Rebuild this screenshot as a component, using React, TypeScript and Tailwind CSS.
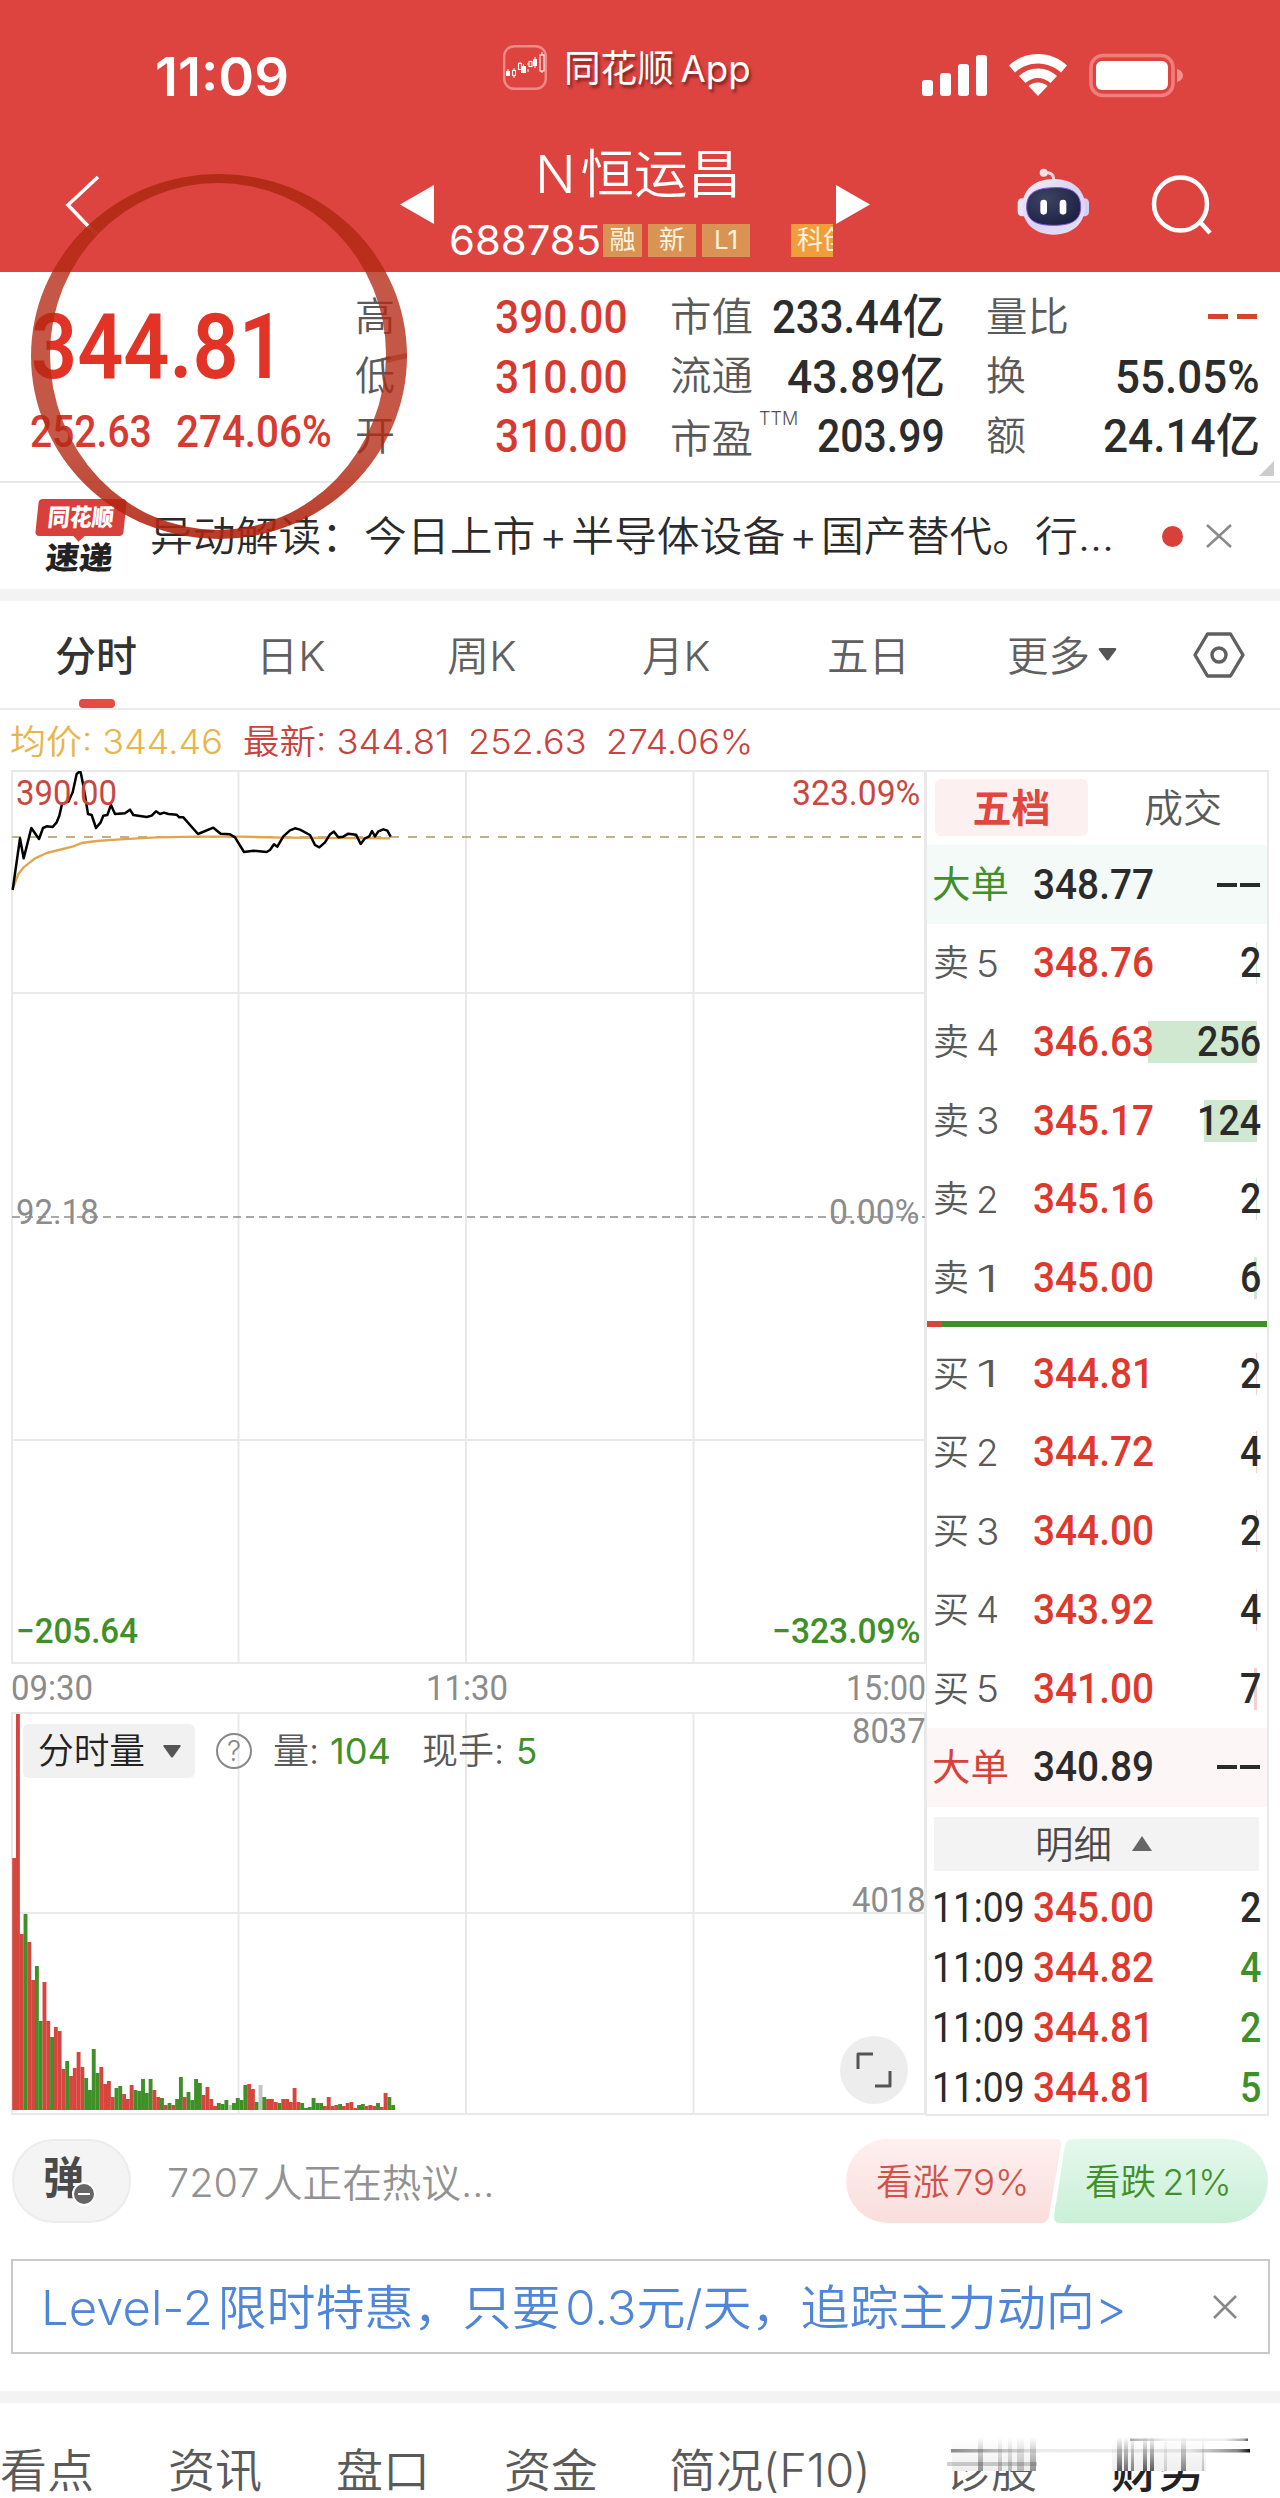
import { useLayoutEffect, useRef, type ReactNode } from "react";

type FitProps = { w: number; className?: string; children: ReactNode };

/** Single-line text condensed or widened to an exact width. */
function Fit({ w, className = "", children }: FitProps) {
  const ref = useRef<HTMLSpanElement>(null);
  useLayoutEffect(() => {
    const el = ref.current;
    if (el) el.style.transform = `scaleX(${w / el.offsetWidth})`;
  }, [w]);
  return (
    <span className={`inline-block shrink-0 leading-none whitespace-nowrap ${className}`} style={{ width: w }}>
      <span ref={ref} className="inline-block origin-left">
        {children}
      </span>
    </span>
  );
}

const NUM = "font-['Roboto','Noto_Sans_CJK_SC',sans-serif]";

const volumes: [string, number][] = (
  "r252 r396 r176 g196 r168 r130 g144 g89 r128 r89 g73 r83 r79 r41 g49 r34 r42 r58 r43 g32 g20 g61 g37 r43 r26 r29 r13 g22 g24 r16 r11 r25 g20 g19 g31 g17 g31 r20 r13 g12 r5 g7 r5 g11 g33 r13 g18 g10 g31 g27 r15 r23 r11 r4 g7 g6 g10 x5 g7 g12 g10 g25 r26 r21 g8 x25 g13 r11 r11 r8 g7 r11 r11 r8 r22 r8 g7 g2 g3 g12 g7 g7 r4 r13 r4 r5 g6 r4 r7 r8 r2 g5 g6 r4 r5 r4 g7 r3 r17 g13 g5"
)
  .split(" ")
  .map((s) => [s[0], Number(s.slice(1))]);
const barColor: Record<string, string> = { r: "#d6463e", g: "#3f9029", x: "#c4c4c4" };

function StatusBar() {
  return (
    <div className="flex h-[140px] items-start text-white">
      <Fit w={134} className="ml-[155px] mt-[50px] text-[54px] font-semibold">11:09</Fit>
      <svg className="ml-[214px] mt-[45px] shrink-0" width="44" height="45" viewBox="0 0 44 45" fill="none">
        <rect x="1.2" y="1.2" width="41.6" height="42.6" rx="10" stroke="#ef8a86" strokeWidth="2.4" />
        <g fill="#fff">
          <rect x="3" y="26" width="4" height="5" />
          <rect x="18" y="21" width="5" height="7" />
          <rect x="30" y="14" width="4" height="7" />
        </g>
        <path d="M5 24v2M11 23v2M11 31v2M17 17v2M20.500 19v2M25 18v2M25 24v3M32 12v2M32 21v2M39 7v3M39 26v2" stroke="#fff" />
        <g stroke="#fff" strokeWidth="1.100">
          <rect x="9.500" y="25.500" width="3" height="5" />
          <rect x="15.500" y="18.500" width="3" height="6" />
          <rect x="26" y="16.500" width="3" height="5" />
          <rect x="37" y="10" width="4" height="16" />
        </g>
      </svg>
      <Fit w={187} className="ml-[17px] mt-[50px] text-[37px] [text-shadow:2px_3px_3px_rgba(90,20,20,0.7)]">同花顺&#8201;App</Fit>
      <svg className="ml-[170px] mt-[52px] shrink-0" width="264" height="48" viewBox="921 52 264 48" fill="#fff">
        <rect x="922" y="80" width="11" height="16" rx="3" />
        <rect x="940" y="73" width="11" height="23" rx="3" />
        <rect x="958" y="64" width="11" height="32" rx="3" />
        <rect x="976" y="55" width="11" height="41" rx="3" />
        <path d="M1038 54c11.500 0 21.800 4.500 29 11.500l-6 7c-6-5.500-14-9-23-9s-17 3.500-23 9l-6-7c7.200-7 17.500-11.500 29-11.500z" />
        <path d="M1038 68.500c7.500 0 14.300 3 19 7.500l-6.500 7c-3.300-3-7.700-5-12.500-5s-9.200 2-12.500 5l-6.500-7c4.700-4.500 11.500-7.500 19-7.500z" />
        <path d="M1038 82.500c3.800 0 7 1.300 9.500 3.500l-9.500 10-9.500-10c2.500-2.200 5.700-3.500 9.500-3.500z" />
        <rect x="1091" y="55.500" width="82" height="40" rx="12" fill="none" stroke="#ef7f7d" strokeWidth="3.500" />
        <rect x="1096" y="61" width="72" height="29" rx="6" />
        <path d="M1177 69c4 1 6 3.500 6 6.500s-2 5.500-6 6.500z" fill="#f4908e" />
      </svg>
    </div>
  );
}

function TitleBar() {
  return (
    <div className="flex h-[132px] text-white">
      <svg className="ml-[60px] mt-[30px] shrink-0" width="44" height="70" viewBox="60 170 44 70" fill="none" stroke="#fff" strokeWidth="3.500">
        <path d="M98 177L68 205L89 227" />
        <path d="M89 227L97 234" opacity=".25" />
      </svg>
      <svg className="ml-[296px] mt-[45px] shrink-0" width="34" height="39" fill="#fff"><path d="M0 19.500L34 0V39z" /></svg>
      <div className="ml-[15px] w-[387px] shrink-0">
        <div className="pt-[9px] pl-[86px]"><Fit w={206} className="text-[52px] font-[350]">N&#8202;恒运昌</Fit></div>
        <div className="mt-[20px] flex h-[38px] items-center">
          <Fit w={152} className="text-[41px]">688785</Fit>
          <div className="ml-[2px] flex h-[33px] text-[26px] text-[#fff3df]">
            <span className="flex w-[39px] items-center justify-center bg-[#d99353]">融</span>
            <span className="ml-[6px] flex w-[48px] items-center justify-center bg-[#d99353]">新</span>
            <span className="ml-[6px] flex w-[48px] items-center justify-center bg-[#d99353]">L1</span>
            <span className="ml-[41px] flex w-[42px] items-center overflow-hidden bg-[#f09d3c] pl-[6px] whitespace-nowrap">科创</span>
          </div>
        </div>
      </div>
      <svg className="mt-[45px] shrink-0" width="34" height="39" fill="#fff"><path d="M34 19.500L0 0V39z" /></svg>
      <svg className="ml-[147px] mt-[27px] shrink-0" width="74" height="72" viewBox="88 40 222 216">
        <defs>
          <linearGradient id="head" x1="0" y1="0" x2="1" y2="1">
            <stop offset="0" stopColor="#fbeef3" /><stop offset=".5" stopColor="#d9d3f4" /><stop offset="1" stopColor="#eae0f6" />
          </linearGradient>
          <radialGradient id="visor" cx=".35" cy=".3" r=".8">
            <stop offset="0" stopColor="#3d4363" /><stop offset="1" stopColor="#1b1f42" />
          </radialGradient>
        </defs>
        <path d="M170 58Q198 54 198 78" fill="none" stroke="#f3d5d8" strokeWidth="9" />
        <circle cx="168" cy="57" r="12" fill="#f6e2e4" />
        <rect x="90" y="134" width="30" height="54" rx="13" fill="#ece6f7" />
        <rect x="274" y="134" width="30" height="54" rx="13" fill="#d4cef3" />
        <path d="M198 76C258 76 292 110 292 158S258 243 198 243S104 206 104 158S138 76 198 76z" fill="url(#head)" />
        <path d="M198 102C255 100 279 120 279 160S252 215 198 215S117 200 117 160S142 103 198 102z" fill="url(#visor)" stroke="#7a55d8" strokeWidth="3" />
        <rect x="158" y="138" width="20" height="45" rx="10" fill="#fff" />
        <rect x="216" y="138" width="20" height="45" rx="10" fill="#fff" />
      </svg>
      <svg className="ml-[60px] mt-[32px] shrink-0" width="64" height="66" viewBox="1153 172 64 66" fill="none" stroke="#fff" strokeWidth="4.500">
        <circle cx="1182.500" cy="204" r="26.500" />
        <path d="M1202 222L1212 233" />
      </svg>
    </div>
  );
}

const L = "text-[40px] font-[350] text-[#5a5a5a]";
const V = `text-[47px] font-medium ${NUM}`;

function Quote() {
  return (
    <div className="relative flex h-[211px] border-b-2 border-[#e8e8e8]">
      <div className="w-[355px] shrink-0 text-[#e23327]">
        <div className="pt-[30px] pl-[31px]"><Fit w={254} className={`text-[91px] font-semibold ${NUM}`}>344.81</Fit></div>
        <div className="mt-[18px] flex pl-[30px]">
          <Fit w={122} className={`text-[43.500px] font-medium text-[#d63a30] ${NUM}`}>252.63</Fit>
          <Fit w={156} className={`ml-[24px] text-[43.500px] font-medium text-[#d63a30] ${NUM}`}>274.06%</Fit>
        </div>
      </div>
      <div className="w-[273px] shrink-0 pt-[15px] text-[#d6392f]">
        {[["高", "390.00"], ["低", "310.00"], ["开", "310.00"]].map(([k, v]) => (
          <div key={k} className="flex h-[59.500px] items-center justify-between">
            <Fit w={40} className={L}>{k}</Fit>
            <Fit w={133} className={V}>{v}</Fit>
          </div>
        ))}
      </div>
      <div className="ml-[42px] w-[275px] shrink-0 pt-[15px] text-[#2c2c2c]">
        <div className="flex h-[59.500px] items-center justify-between"><Fit w={83} className={L}>市值</Fit><Fit w={173} className={V}>233.44亿</Fit></div>
        <div className="flex h-[59.500px] items-center justify-between"><Fit w={83} className={L}>流通</Fit><Fit w={158} className={V}>43.89亿</Fit></div>
        <div className="flex h-[59.500px] items-center justify-between">
          <div className="flex items-center">
            <Fit w={83} className={`mt-[6px] ${L}`}>市盈</Fit>
            <Fit w={39} className="ml-[6px] mb-[34px] text-[18px] font-light text-[#555]">TTM</Fit>
          </div>
          <Fit w={128} className={V}>203.99</Fit>
        </div>
      </div>
      <div className="ml-[41px] w-[274px] shrink-0 pt-[15px] text-[#2c2c2c]">
        <div className="flex h-[59.500px] items-center justify-between">
          <Fit w={83} className={L}>量比</Fit>
          <div className="mr-[3px] flex gap-[9px]"><i className="h-[5px] w-[20px] bg-[#d6432f]" /><i className="h-[5px] w-[20px] bg-[#d6432f]" /></div>
        </div>
        <div className="flex h-[59.500px] items-center justify-between"><Fit w={40} className={L}>换</Fit><Fit w={145} className={V}>55.05%</Fit></div>
        <div className="flex h-[59.500px] items-center justify-between"><Fit w={40} className={L}>额</Fit><Fit w={157} className={V}>24.14亿</Fit></div>
      </div>
      <svg className="absolute right-[6px] bottom-[5px]" width="15" height="15" fill="#ccc"><path d="M15 0V15H0z" /></svg>
    </div>
  );
}

function News() {
  return (
    <div className="flex h-[118px] items-center border-b-[12px] border-[#f3f3f3]">
      <div className="ml-[37px] w-[88px] shrink-0">
        <div className="relative flex h-[37px] -skew-x-6 items-center justify-center rounded-[4px] bg-[#d8403c] text-white">
          <Fit w={66} className="text-[24px] font-black">同花顺</Fit>
          <i className="absolute top-[33px] left-[40px] size-[8px] rotate-45 bg-[#d8403c]" />
        </div>
        <div className="mt-[5px] flex h-[32px] -skew-x-6 items-center pl-[9px] text-[#222]"><Fit w={67} className="text-[31px] font-black">速递</Fit></div>
      </div>
      <Fit w={964} className="ml-[25px] text-[41px] text-[#2b2b2b] font-[350]">异动解读：今日上市&#8202;+&#8202;半导体设备&#8202;+&#8202;国产替代。行...</Fit>
      <i className="ml-[48px] size-[21px] shrink-0 rounded-full bg-[#d9403a]" />
      <svg className="ml-[23px] shrink-0" width="26" height="24" stroke="#8a8a8a" strokeWidth="2.500"><path d="M1 1L25 23M25 1L1 23" /></svg>
    </div>
  );
}

function ChartTabs() {
  return (
    <div className="flex h-[109px] items-center border-b-2 border-[#ebebeb] text-[41px] font-[350] text-[#606060]">
      <div className="relative ml-[55px] flex h-full items-center pt-[3px]">
        <Fit w={82} className="font-medium text-[#333]">分时</Fit>
        <i className="absolute bottom-0 left-[24px] h-[9px] w-[36px] rounded-[4px] bg-[#e34d40]" />
      </div>
      <Fit w={70} className="mt-[3px] ml-[119px]">日K</Fit>
      <Fit w={70} className="mt-[3px] ml-[121px]">周K</Fit>
      <Fit w={69} className="mt-[3px] ml-[125px]">月K</Fit>
      <Fit w={83} className="mt-[3px] ml-[116px]">五日</Fit>
      <Fit w={83} className="mt-[3px] ml-[97px]">更多</Fit>
      <svg className="ml-[8px] shrink-0" width="19" height="13" fill="#555"><path d="M2 0H17Q19 0 18 2L10.500 12Q9.500 13 8.500 12L1 2Q0 0 2 0z" /></svg>
      <svg className="ml-[76px] shrink-0" width="52" height="46" viewBox="0 0 52 46" fill="none" stroke="#606060" strokeWidth="3.400" strokeLinejoin="round">
        <path d="M14.500 2H37.500L50 23L37.500 44H14.500L2 23z" /><circle cx="26" cy="23" r="7" />
      </svg>
    </div>
  );
}

function PriceChart() {
  return (
    <div className={`relative h-[895px] w-[915px] text-[34.500px] text-[#8c8c8c] ${NUM}`}>
      <svg className="absolute inset-0" width="915" height="895" fill="none">
        <path d="M1 1H914V893H1zM227.500 1V893M455 1V893M682.500 1V893M1 223H914M1 670H914" stroke="#e9e9e9" strokeWidth="2" />
        <path d="M1 67H914" stroke="#c2b088" strokeWidth="1.800" strokeDasharray="9 9" />
        <path d="M1 447H914" stroke="#8c8c8c" strokeWidth="1.500" strokeDasharray="8 5" />
        <g transform="translate(-11 -181) scale(.33333)" strokeLinejoin="round">
          <polyline stroke="#e3a44e" strokeWidth="7" points="38,900 55,855 70,836 105,808 140,792 220,772 245,762 290,756 360,751 470,745 600,743 720,743 850,746 1170,748" />
          <polyline stroke="#000" strokeWidth="7.500" points="38,903 60,748 71,808 94,717 117,750 129,717 140,712 158,714 170,700 178,680 186,645 205,638 218,610 230,555 236,550 242,550 248,580 256,625 264,675 275,678 288,717 302,700 310,680 322,678 333,648 345,675 375,673 390,662 400,678 440,684 455,680 468,667 480,675 492,671 505,675 530,677 538,685 550,685 594,735 640,716 662,734 690,736 705,745 732,789 760,785 800,789 810,783 822,766 832,773 850,742 870,724 885,718 900,722 930,738 945,768 958,775 975,760 990,736 1002,728 1015,745 1030,743 1045,734 1068,737 1082,765 1095,748 1108,742 1116,726 1125,742 1135,727 1150,721 1162,725 1172,743" />
        </g>
      </svg>
      <div className="relative flex h-full flex-col justify-between pt-[6px] pr-[6px] pb-[17px] pl-[5px] font-[450]">
        <div className="flex justify-between text-[#c9473f]"><Fit w={101}>390.00</Fit><Fit w={128}>323.09%</Fit></div>
        <div className="flex justify-between"><Fit w={83}>92.18</Fit><Fit w={91}>0.00%</Fit></div>
        <div className="flex justify-between font-medium text-[#3f9029]"><Fit w={122}>−205.64</Fit><Fit w={148}>−323.09%</Fit></div>
      </div>
    </div>
  );
}

function VolumeChart() {
  return (
    <div className="relative h-[404px] w-[915px]">
      <svg className="absolute inset-0" width="915" height="404">
        <path d="M1 1H914V402H1zM227.500 1V402M455 1V402M682.500 1V402M1 201H914" stroke="#e9e9e9" strokeWidth="2" fill="none" />
        {volumes.map(([c, h], i) => (
          <rect key={i} x={1.2 + i * 3.79} y={398 - h} width={3.9} height={h} fill={barColor[c]} />
        ))}
      </svg>
      <div className="relative flex h-full flex-col">
        <div className="mt-[12px] ml-[12px] flex h-[54px] items-center text-[35px] font-[350] text-[#5a5a5a]">
          <div className="flex h-full w-[172px] items-center rounded-[6px] bg-[#f1f1f1] pl-[15px]">
            <Fit w={107} className="text-[36px] text-[#222]">分时量</Fit>
            <svg className="ml-[18px]" width="18" height="13" fill="#555"><path d="M1 0H17Q18 0 17.500 1.500L10 12Q9 13 8 12L.5 1.500Q0 0 1 0z" /></svg>
          </div>
          <span className="ml-[21px] flex size-[36px] items-center justify-center rounded-full border-2 border-[#888] text-[28px] leading-none text-[#888]">?</span>
          <Fit w={46} className="ml-[21px] text-[36px]">量:</Fit>
          <Fit w={61} className="ml-[11px] font-normal text-[#3f9029]">104</Fit>
          <Fit w={82} className="ml-[31px] text-[36px]">现手:</Fit>
          <Fit w={21} className="ml-[12px] font-normal text-[#3f9029]">5</Fit>
        </div>
      </div>
      <Fit w={74} className={`absolute top-[2px] right-0 text-[34.500px] text-[#8c8c8c] ${NUM}`}>8037</Fit>
      <Fit w={74} className={`absolute top-[171px] right-0 text-[34.500px] text-[#8c8c8c] ${NUM}`}>4018</Fit>
      <div className="absolute right-[18px] bottom-[12px] flex size-[68px] items-center justify-center rounded-full bg-[#ededed]">
        <svg width="36" height="36" fill="none" stroke="#555" strokeWidth="3"><path d="M2 17V2H17M34 19V34H19" strokeLinejoin="round" /></svg>
      </div>
    </div>
  );
}

const P = `text-[42px] font-medium ${NUM}`;

function Level({ k, n, price, qty, bar = 1, tone = "sell" }: { k: string; n: number; price: string; qty: string; bar?: number; tone?: string }) {
  return (
    <div className="relative flex h-[78.700px] items-center">
      <i className={`absolute right-[10px] h-[42px] ${tone === "sell" ? "bg-[#d0e8cf]" : "bg-[#f3cfcd]"}`} style={{ width: bar }} />
      <Fit w={36} className="ml-[6px] text-[36px] font-[350] text-[#5a5a5a]">{k}</Fit>
      <Fit w={23} className="ml-[7px] text-[37px] font-[350] text-[#5a5a5a]">{n}</Fit>
      <Fit w={121} className={`relative ml-[34px] text-[#df382c] ${P}`}>{price}</Fit>
      <Fit w={qty.length * 21.5} className={`relative mr-[6px] ml-auto text-[#2b2b2b] ${P}`}>{qty}</Fit>
    </div>
  );
}

function BigOrder({ price, className }: { price: string; className: string }) {
  return (
    <div className={`flex h-[79px] items-center ${className}`}>
      <Fit w={77} className="ml-[5px] text-[37px] font-normal">大单</Fit>
      <Fit w={121} className={`ml-[24px] text-[#2b2b2b] ${P}`}>{price}</Fit>
      <div className="mr-[7px] ml-auto flex gap-[3px]"><i className="h-[4px] w-[20px] bg-[#2b2b2b]" /><i className="h-[4px] w-[20px] bg-[#2b2b2b]" /></div>
    </div>
  );
}

function OrderBook() {
  return (
    <div className="h-[1346px] w-[343px] border-2 border-l-[1px] border-[#e9e9e9]">
      <div className="flex h-[73px] items-center pb-[3px]">
        <div className="ml-[8px] flex h-[57px] w-[153px] items-center justify-center rounded-[6px] bg-[#fdf0f1]"><Fit w={78} className="text-[39px] font-bold text-[#df483d]">五档</Fit></div>
        <Fit w={78} className="ml-[56px] text-[39px] font-[350] text-[#5a5a5a]">成交</Fit>
      </div>
      <BigOrder price="348.77" className="bg-[#f3faf7] text-[#3f9029]" />
      <Level k="卖" n={5} price="348.76" qty="2" />
      <Level k="卖" n={4} price="346.63" qty="256" bar={109} />
      <Level k="卖" n={3} price="345.17" qty="124" bar={53} />
      <Level k="卖" n={2} price="345.16" qty="2" />
      <Level k="卖" n={1} price="345.00" qty="6" bar={3} />
      <div className="mt-[4px] mb-[7px] flex h-[6px]"><i className="w-[15px] bg-[#d6463e]" /><i className="flex-1 bg-[#3f9029]" /></div>
      <Level k="买" n={1} price="344.81" qty="2" tone="buy" />
      <Level k="买" n={2} price="344.72" qty="4" tone="buy" />
      <Level k="买" n={3} price="344.00" qty="2" tone="buy" />
      <Level k="买" n={4} price="343.92" qty="4" tone="buy" />
      <Level k="买" n={5} price="341.00" qty="7" tone="buy" bar={3} />
      <BigOrder price="340.89" className="bg-[#fdf6f6] text-[#d6413a]" />
      <div className="mt-[10px] mr-[8px] mb-[7px] ml-[7px] flex h-[54px] items-center bg-[#f3f3f3]">
        <Fit w={77} className="ml-[101px] text-[38px] font-[350] text-[#4a4a4a]">明细</Fit>
        <svg className="ml-[20px]" width="20" height="15" fill="#666"><path d="M10 0L20 15H0z" /></svg>
      </div>
      {[["345.00", "2", "text-[#2b2b2b]"], ["344.82", "4", "text-[#3f9029]"], ["344.81", "2", "text-[#3f9029]"], ["344.81", "5", "text-[#3f9029]"]].map(([p, q, c], i) => (
        <div key={i} className="flex h-[60px] items-center">
          <Fit w={93} className={`ml-[5px] text-[#2b2b2b] text-[42px] ${NUM}`}>11:09</Fit>
          <Fit w={121} className={`ml-[8px] text-[#df382c] ${P}`}>{p}</Fit>
          <Fit w={21.5} className={`mr-[6px] ml-auto ${c} ${P}`}>{q}</Fit>
        </div>
      ))}
    </div>
  );
}

function Discuss() {
  return (
    <div className="mt-[23px] flex h-[84px] items-center">
      <div className="relative ml-[12px] flex h-[84px] w-[119px] items-center rounded-[42px] border-2 border-[#ececec] bg-[#f4f4f4] pl-[29px]">
        <Fit w={41} className="mb-[7px] text-[44px] font-bold text-[#4a4a4a]">弹</Fit>
        <span className="absolute top-[41px] left-[58px] flex size-[24px] items-center justify-center rounded-full border-2 border-white bg-[#666]"><i className="h-[2.500px] w-[12px] bg-white" /></span>
      </div>
      <Fit w={327} className="mt-[2px] ml-[36px] text-[39px] font-[350] text-[#929292]">7207&#8202;人正在热议...</Fit>
      <div className="relative ml-auto mr-[12px] flex h-[84px] w-[422px] items-center">
        <svg className="absolute inset-0" width="422" height="84">
          <defs>
            <linearGradient id="up" x1="0" y1="0" x2="0" y2="1"><stop stopColor="#fdf0ef" /><stop offset="1" stopColor="#f9dedc" /></linearGradient>
            <linearGradient id="down" x1="0" y1="0" x2="0" y2="1"><stop stopColor="#e6f8ed" /><stop offset="1" stopColor="#c9f0d6" /></linearGradient>
          </defs>
          <path d="M42 0H210Q216 0 215 6L203 77Q202 84 195 84H42A42 42 0 0 1 42 0z" fill="url(#up)" />
          <path d="M227 0H380A42 42 0 0 1 380 84H214Q207 84 208 77L219 7Q220 0 227 0z" fill="url(#down)" />
        </svg>
        <Fit w={153} className="relative mt-[2px] ml-[30px] text-[36px] text-[#d0524b] font-[350]">看涨&#8202;79%</Fit>
        <Fit w={147} className="relative mt-[2px] ml-[56px] text-[36px] text-[#3f9029] font-[350]">看跌&#8201;21%</Fit>
      </div>
    </div>
  );
}

function Smear() {
  const cols: [number, number, number][] = [[978, 5, 0.5], [998, 4, 0.3], [1008, 4, 0.3], [1017, 7, 0.3], [1030, 6, 0.5], [1117, 5, 0.8], [1124, 4, 0.7], [1131, 3, 0.6], [1143, 4, 0.8], [1150, 4, 0.8], [1164, 3, 0.2], [1181, 5, 0.6], [1202, 2, 0.25]];
  return (
    <svg className="absolute top-[30px] left-[940px]" width="320" height="40" viewBox="940 2434 320 40">
      <defs>
        <linearGradient id="v" x1="0" y1="0" x2="0" y2="1"><stop stopColor="#333" stopOpacity="0" /><stop offset="1" stopColor="#333" /></linearGradient>
        <linearGradient id="h"><stop stopColor="#444" stopOpacity=".6" /><stop offset=".3" stopColor="#444" stopOpacity=".1" /><stop offset=".8" stopColor="#444" stopOpacity=".12" /><stop offset=".96" stopColor="#333" stopOpacity=".6" /><stop offset="1" stopColor="#111" /></linearGradient>
        <linearGradient id="wash" x1="0" y1="0" x2="0" y2="1"><stop stopColor="#fff" /><stop offset="1" stopColor="#eee" /></linearGradient>
      </defs>
      <rect x="940" y="2434" width="320" height="38" fill="#fff" />
      <rect x="952" y="2440" width="84" height="32" fill="url(#wash)" />
      <rect x="1112" y="2440" width="94" height="32" fill="url(#wash)" />
      {cols.map(([x, w, o]) => <rect key={x} x={x} y="2438" width={w} height="34" fill="url(#v)" opacity={o} />)}
      <rect x="1130" y="2439.500" width="118" height="2.500" fill="url(#h)" opacity=".7" />
      <rect x="951" y="2450" width="299" height="3.500" fill="url(#h)" />
      <rect x="947" y="2463" width="90" height="4" fill="#444" opacity=".25" />
    </svg>
  );
}

export default function App() {
  return (
    <div className="relative h-[2498px] w-[1280px] overflow-hidden bg-white font-['Inter','Noto_Sans_CJK_SC',sans-serif] leading-none">
      <header className="h-[272px] bg-[#dd4440]">
        <StatusBar />
        <TitleBar />
      </header>
      <Quote />
      <News />
      <ChartTabs />
      <div className="flex h-[60px] items-center pt-[3px] pl-[10px] text-[34px] font-[350] text-[#c9423e]">
        <Fit w={213} className="text-[#e8b548]">均价: 344.46</Fit>
        <Fit w={206} className="ml-[20px]">最新: 344.81</Fit>
        <Fit w={119} className="ml-[19px]">252.63</Fit>
        <Fit w={147} className="ml-[19px]">274.06%</Fit>
      </div>
      <div className="flex pl-[11px]">
        <div>
          <PriceChart />
          <div className={`flex h-[47px] items-center justify-between text-[35px] text-[#8c8c8c] ${NUM}`}>
            <Fit w={82}>09:30</Fit><Fit w={82} className="-ml-[5px]">11:30</Fit><Fit w={80}>15:00</Fit>
          </div>
          <VolumeChart />
        </div>
        <OrderBook />
      </div>
      <Discuss />
      <div className="mt-[36px] ml-[11px] flex h-[95px] w-[1259px] items-center border-2 border-[#c9c9c9]">
        <Fit w={1086} className="mt-[2px] ml-[28px] text-[48px] font-[350] text-[#4f86d8]">Level-2&#8202;限时特惠，只要&#8202;0.3元/天，追踪主力动向&gt;</Fit>
        <svg className="ml-[86px] shrink-0" width="24" height="24" stroke="#888" strokeWidth="2.500"><path d="M1 1L23 23M23 1L1 23" /></svg>
      </div>
      <div className="mt-[37px] h-[12px] bg-[#f3f3f3]" />
      <nav className="relative flex h-[94px] items-end pb-[4px] text-[46px] font-[350] text-[#5a5a5a]">
        <Fit w={94}>看点</Fit>
        <Fit w={94} className="ml-[74px]">资讯</Fit>
        <Fit w={94} className="ml-[74px]">盘口</Fit>
        <Fit w={94} className="ml-[74px]">资金</Fit>
        <Fit w={202} className="ml-[71px]">简况(F10)</Fit>
        <Fit w={92} className="ml-[74px]">诊股</Fit>
        <Fit w={94} className="ml-[74px] font-medium text-[#222]">财务</Fit>
        <Smear />
      </nav>
      <svg className="absolute top-[165px] left-[20px]" width="400" height="385" viewBox="20 165 400 385">
        <defs>
          <linearGradient id="marker" x1="0" y1="0" x2="0" y2="1">
            <stop stopColor="#ad2812" stopOpacity=".88" /><stop offset=".3" stopColor="#b42812" stopOpacity=".78" />
            <stop offset=".75" stopColor="#b42812" stopOpacity=".78" /><stop offset="1" stopColor="#b02410" stopOpacity=".9" />
          </linearGradient>
        </defs>
        <path fillRule="evenodd" fill="url(#marker)" d="M31 356A188 182 0 0 1 407 356A188 183 0 0 1 31 356zM50 354A168 171 0 0 1 386 354A168 176 0 0 1 50 354z" />
        <path d="M386 357L407 353V358L387 363z" fill="#a02812" fillOpacity=".45" />
      </svg>
    </div>
  );
}
